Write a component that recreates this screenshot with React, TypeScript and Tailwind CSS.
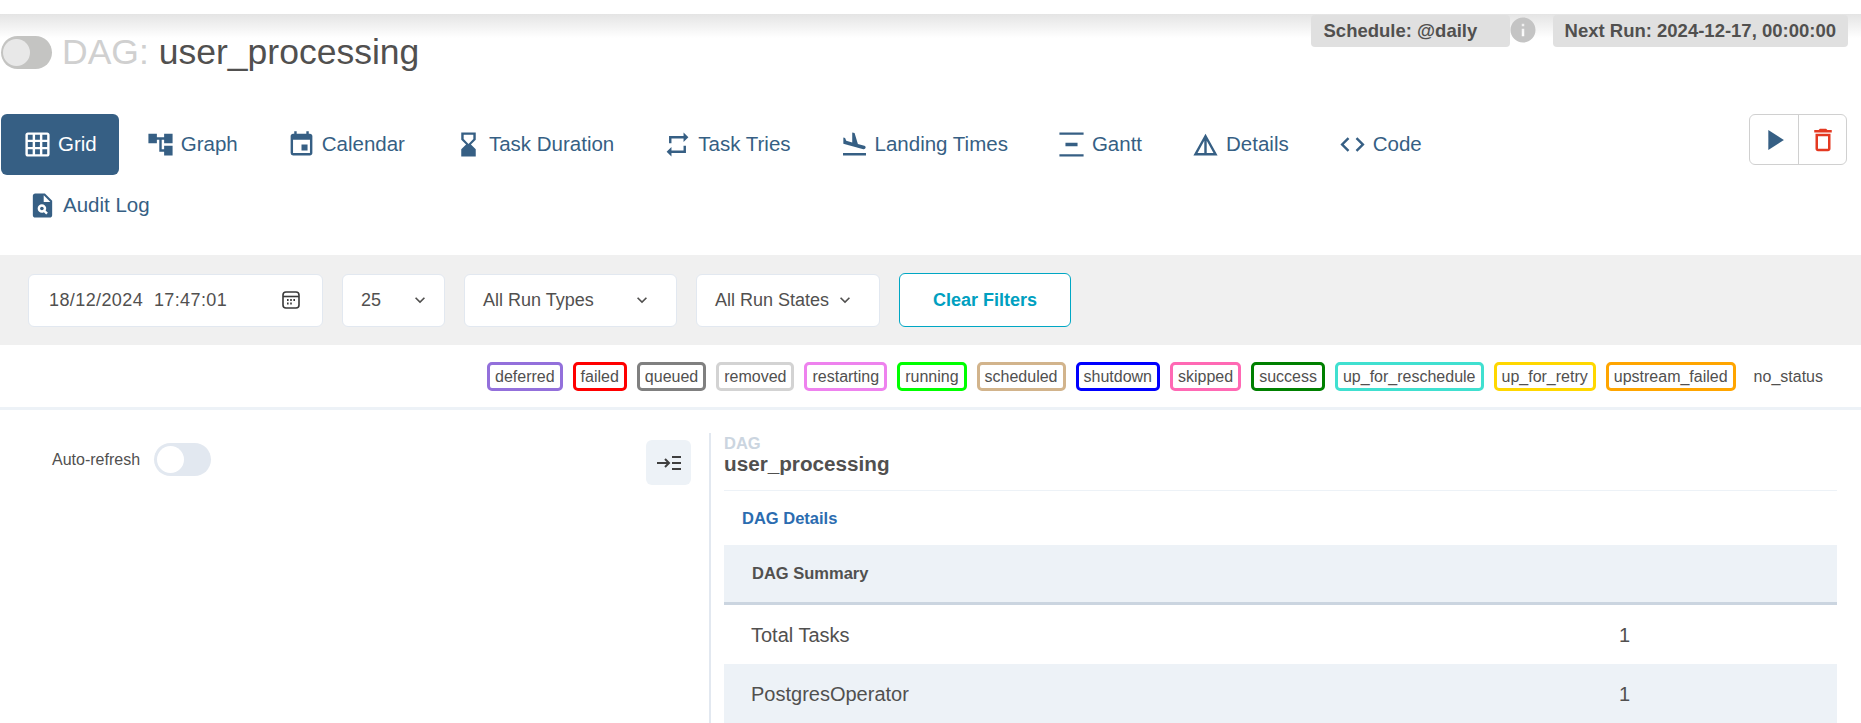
import {
  MdGridOn,
  MdAccountTree,
  MdEvent,
  MdHourglassBottom,
  MdRepeat,
  MdFlightLand,
  MdVerticalDistribute,
  MdDetails,
  MdCode,
  MdPlagiarism,
  MdPlayArrow,
  MdDeleteOutline,
  MdInfo,
  MdKeyboardArrowDown,
} from 'react-icons/md';
import type { IconType } from 'react-icons';

const tabs: { Icon: IconType; label: string; active?: boolean }[] = [
  { Icon: MdGridOn, label: 'Grid', active: true },
  { Icon: MdAccountTree, label: 'Graph' },
  { Icon: MdEvent, label: 'Calendar' },
  { Icon: MdHourglassBottom, label: 'Task Duration' },
  { Icon: MdRepeat, label: 'Task Tries' },
  { Icon: MdFlightLand, label: 'Landing Times' },
  { Icon: MdVerticalDistribute, label: 'Gantt' },
  { Icon: MdDetails, label: 'Details' },
  { Icon: MdCode, label: 'Code' },
];

const states = [
  { name: 'deferred', color: 'border-[#9370db]' },
  { name: 'failed', color: 'border-[#ff0000]' },
  { name: 'queued', color: 'border-[#808080]' },
  { name: 'removed', color: 'border-[#d3d3d3]' },
  { name: 'restarting', color: 'border-[#ee82ee]' },
  { name: 'running', color: 'border-[#00ff00]' },
  { name: 'scheduled', color: 'border-[#d2b48c]' },
  { name: 'shutdown', color: 'border-[#0000ff]' },
  { name: 'skipped', color: 'border-[#ff69b4]' },
  { name: 'success', color: 'border-[#008000]' },
  { name: 'up_for_reschedule', color: 'border-[#40e0d0]' },
  { name: 'up_for_retry', color: 'border-[#ffd700]' },
  { name: 'upstream_failed', color: 'border-[#ffa500]' },
  { name: 'no_status', color: 'border-transparent' },
];

function Tab({ Icon, label, active }: { Icon: IconType; label: string; active?: boolean }) {
  return (
    <a
      className={
        'flex h-[61px] items-center gap-[6px] rounded-[6px] px-[22px] text-[20.5px] ' +
        (active ? 'bg-[#365f84] text-white' : 'text-[#365f84]')
      }
    >
      <Icon className="h-[29px] w-[29px] shrink-0" />
      {label}
    </a>
  );
}

function Select({ label, width, chevronGap }: { label: string; width: string; chevronGap: string }) {
  return (
    <div className={'flex h-[53px] items-center rounded-[6px] border border-[#e2e8f0] bg-white pl-[18px] ' + width}>
      <span>{label}</span>
      <span className={chevronGap}>
        <MdKeyboardArrowDown className="h-[20px] w-[20px] text-[#51504f]" />
      </span>
    </div>
  );
}

function PickerIcon() {
  return (
    <svg width="20" height="20" viewBox="0 0 20 20" fill="none" stroke="#3a3a3a" strokeWidth="1.6">
      <rect x="2" y="2" width="16" height="16" rx="3" />
      <path d="M2 6.5h16" />
      <path d="M6 10h1.6M9.2 10h1.6M12.4 10h1.6M6 13.5h1.6M9.2 13.5h1.6" strokeWidth="1.8" />
    </svg>
  );
}

export default function App() {
  return (
    <div className="h-[723px] overflow-hidden bg-white font-['Liberation_Sans',Arial,sans-serif] text-[#51504f]">
      <div className="h-[14px]" />
      <header className="flex h-[100px] items-start justify-between bg-[linear-gradient(#e4e4e4,#ffffff_24px)] pl-px pr-[13px]">
        <h1 className="mt-[18px] flex items-center text-[35.5px] leading-[40px]">
          <span className="relative h-[33px] w-[51px] rounded-full bg-[#c4c4c2]">
            <span className="absolute top-[3px] left-[2px] h-[27px] w-[27px] rounded-full bg-[#e8e8e8]" />
          </span>
          <span className="ml-[10px] text-[#d0d0d0]">DAG:</span>
          <span className="ml-[10px]">user_processing</span>
        </h1>
        <div className="mt-px flex items-start text-[18.5px] font-bold">
          <span className="flex h-[32px] w-[199px] items-center rounded-[4px] bg-[#e0e0e0] pl-[13px]">Schedule: @daily</span>
          <MdInfo className="ml-[-2px] h-[30px] w-[30px] text-[#c4c4c4]" />
          <span className="ml-[15px] flex h-[32px] items-center rounded-[4px] bg-[#e0e0e0] px-[12px]">
            Next Run: 2024-12-17, 00:00:00
          </span>
        </div>
      </header>

      <div className="flex items-start justify-between pr-[14px] pl-px">
        <nav className="flex gap-[5px]">
          {tabs.map((t) => (
            <Tab key={t.label} {...t} />
          ))}
        </nav>
        <div className="flex h-[51px] w-[98px] rounded-[6px] border border-[#d0d0d0]">
          <button className="flex w-[49px] items-center justify-center border-r border-[#d0d0d0]">
            <MdPlayArrow className="h-[34px] w-[34px] text-[#365f84]" />
          </button>
          <button className="flex flex-1 items-center justify-center">
            <MdDeleteOutline className="h-[30px] w-[30px] text-[#e43921]" />
          </button>
        </div>
      </div>
      <div className="pl-[6px]">
        <a className="flex h-[61px] w-fit items-center gap-[6px] px-[22px] text-[20.5px] text-[#365f84]">
          <MdPlagiarism className="h-[29px] w-[29px]" />
          Audit Log
        </a>
      </div>

      <div className="mt-[19px] flex h-[90px] items-center gap-[19px] bg-[#f0f0f0] pl-[28px] text-[18px]">
        <div className="flex h-[53px] w-[295px] items-center justify-between rounded-[6px] border border-[#e2e8f0] bg-white pr-[21px] pl-[20px]">
          <span className="whitespace-pre tracking-[0.4px]">18/12/2024  17:47:01</span>
          <PickerIcon />
        </div>
        <Select label="25" width="w-[103px]" chevronGap="ml-[29px]" />
        <Select label="All Run Types" width="w-[213px]" chevronGap="ml-[38px]" />
        <Select label="All Run States" width="w-[184px]" chevronGap="ml-[6px]" />
        <button className="flex h-[54px] w-[172px] items-center justify-center rounded-[6px] border border-[#00a7c4] bg-white font-bold text-[#00a0c0]">
          Clear Filters
        </button>
      </div>

      <div className="flex h-[65px] items-center justify-end gap-[10px] border-b-[3px] border-[#edf2f7] pr-[30px] text-[16px]">
        {states.map((s) => (
          <span key={s.name} className={'rounded-[5px] border-[3px] px-[5px] leading-[23px] ' + s.color}>
            {s.name}
          </span>
        ))}
      </div>

      <div className="flex">
        <div className="flex h-[310px] w-[709px] items-start justify-between pt-[30px] pr-[18px] pl-[52px]">
          <div className="mt-[3px] flex items-center gap-[14px] text-[16px]">
            <span>Auto-refresh</span>
            <span className="flex h-[33px] w-[57px] items-center rounded-full bg-[#e2e8f0] p-[3px]">
              <span className="h-[27px] w-[27px] rounded-full bg-white" />
            </span>
          </div>
          <button className="flex h-[45px] w-[45px] items-center justify-center rounded-[6px] bg-[#edf2f7]">
            <svg width="24" height="16" viewBox="0 0 24 16" fill="none" stroke="#3f3f3f" strokeWidth="2">
              <path d="M0 8h11M8 4l4 4-4 4" />
              <path d="M15 2h9M15 8h9M15 14h9" />
            </svg>
          </button>
        </div>

        <div className="mt-[23px] flex-1 border-l-2 border-[#e2e8f0] pl-[13px]">
          <div className="mr-[24px] h-[58px] border-b border-[#edf2f7] leading-none">
            <div className="pt-[2px] text-[16.5px] font-bold text-[#cbd5e0]">DAG</div>
            <div className="mt-[2px] text-[20.7px] font-bold">user_processing</div>
          </div>
          <div className="flex h-[54px] items-center pl-[18px] text-[16.5px] font-bold text-[#2b6cb0]">DAG Details</div>
          <div className="mr-[24px]">
            <div className="flex h-[60px] items-center border-b-[3px] border-[#cbd5e0] bg-[#edf2f7] pl-[28px] text-[16.5px] font-bold">
              DAG Summary
            </div>
            <div className="flex h-[59px] items-center pl-[27px] text-[20px]">
              <span className="w-[868px]">Total Tasks</span>
              <span>1</span>
            </div>
            <div className="flex h-[59px] items-center bg-[#edf2f7] pl-[27px] text-[20px]">
              <span className="w-[868px]">PostgresOperator</span>
              <span>1</span>
            </div>
          </div>
        </div>
      </div>
    </div>
  );
}
